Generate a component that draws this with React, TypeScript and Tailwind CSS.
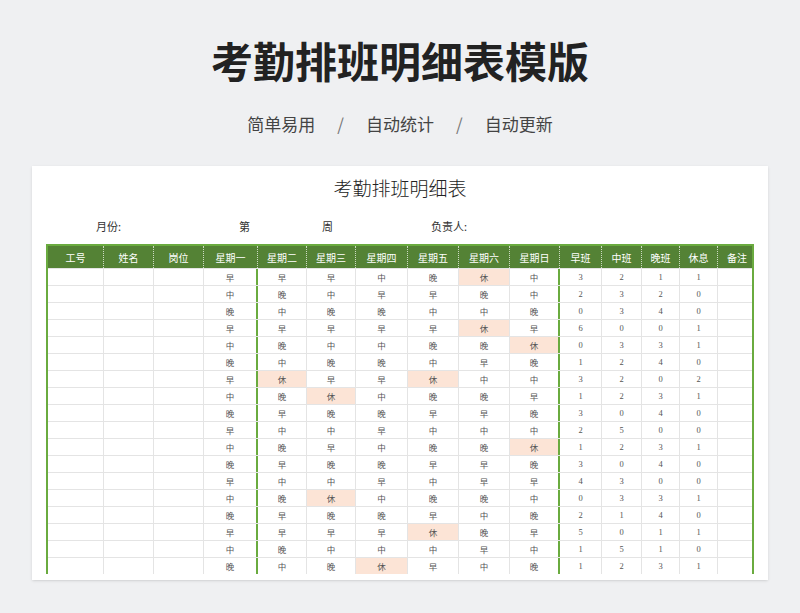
import React from 'react';

const rows: [string, number[]][] = [
  ['早早早中晚休中', [3, 2, 1, 1]],
  ['中晚中早早晚中', [2, 3, 2, 0]],
  ['晚中晚晚中中晚', [0, 3, 4, 0]],
  ['早早早早早休早', [6, 0, 0, 1]],
  ['中晚中中晚晚休', [0, 3, 3, 1]],
  ['晚中晚晚中早晚', [1, 2, 4, 0]],
  ['早休早早休中中', [3, 2, 0, 2]],
  ['中晚休中晚晚早', [1, 2, 3, 1]],
  ['晚早晚晚早早晚', [3, 0, 4, 0]],
  ['早中中早中中中', [2, 5, 0, 0]],
  ['中晚早中晚晚休', [1, 2, 3, 1]],
  ['晚早晚晚早早晚', [3, 0, 4, 0]],
  ['早中中早中早早', [4, 3, 0, 0]],
  ['中晚休中晚晚中', [0, 3, 3, 1]],
  ['晚早晚晚早中晚', [2, 1, 4, 0]],
  ['早早早早休晚早', [5, 0, 1, 1]],
  ['中晚中中中早中', [1, 5, 1, 0]],
  ['晚中晚休早中晚', [1, 2, 3, 1]],
];

const widths = [56, 50, 50, 54, 49, 49, 52, 51, 51, 50, 42, 40, 38, 38, 38];
const heads = ['工号', '姓名', '岗位', '星期一', '星期二', '星期三', '星期四', '星期五', '星期六', '星期日', '早班', '中班', '晚班', '休息', '备注'];
const cols = widths.map((w) => `${w}px`).join(' ');

const App: React.FC = () => {
  return (
    <div className="w-[800px] h-[613px] bg-[#eff0f2] flex flex-col items-center overflow-hidden" style={{ fontFamily: '"Noto Sans CJK SC", sans-serif' }}>
      <h1 className="mt-[32px] text-[42px] leading-[56px] font-bold text-[#222]">考勤排班明细表模版</h1>
      <div className="mt-[24px] flex gap-[22px] text-[17px] text-[#444] leading-[24px]">
        <span>简单易用</span><span className="text-[#777]">/</span><span>自动统计</span><span className="text-[#777]">/</span><span>自动更新</span>
      </div>
      <div className="mt-[30px] w-[736px] h-[414px] bg-white overflow-hidden flex flex-col items-center shadow-sm">
        <div className="mt-[8px] text-[19px] leading-[28px] text-[#222] font-light">考勤排班明细表</div>
        <div className="mt-[16px] w-[708px] flex text-[11px] text-[#333] leading-[16px]">
          <span className="ml-[50px]">月份:</span>
          <span className="ml-[118px]">第</span>
          <span className="ml-[72px]">周</span>
          <span className="ml-[98px]">负责人:</span>
        </div>
        <div className="mt-[10px] w-[708px] border-2 border-[#6aab3f] border-b-0">
          <div className="grid bg-[#548235] text-white text-[10px] h-[22px]" style={{ gridTemplateColumns: cols }}>
            {heads.map((h, i) => (
              <div key={h} className={`flex items-center justify-center ${i < heads.length - 1 ? 'border-r border-dotted border-white/70' : ''}`}>{h}</div>
            ))}
          </div>
          {rows.map(([days, nums], r) => (
            <div key={r} className="grid h-[17px] text-[8.5px] text-[#555] border-t border-[#e4e4e4]" style={{ gridTemplateColumns: cols }}>
              <div className="border-r border-[#e4e4e4]" />
              <div className="border-r border-[#e4e4e4]" />
              <div className="border-r border-[#e4e4e4]" />
              {days.split('').map((d, i) => (
                <div
                  key={i}
                  className={`flex items-center justify-center ${d === '休' ? 'bg-[#fce4d6]' : ''} ${i === 0 || i === 6 ? 'border-r-2 border-[#6aab3f]' : 'border-r border-[#e4e4e4]'}`}
                >
                  {d}
                </div>
              ))}
              {nums.map((n, i) => (
                <div key={i} className="flex items-center justify-center border-r border-[#e4e4e4] text-[#555]" style={{ fontFamily: '"Liberation Serif", serif' }}>{n}</div>
              ))}
              <div />
            </div>
          ))}
        </div>
      </div>
    </div>
  );
};

export default App;
